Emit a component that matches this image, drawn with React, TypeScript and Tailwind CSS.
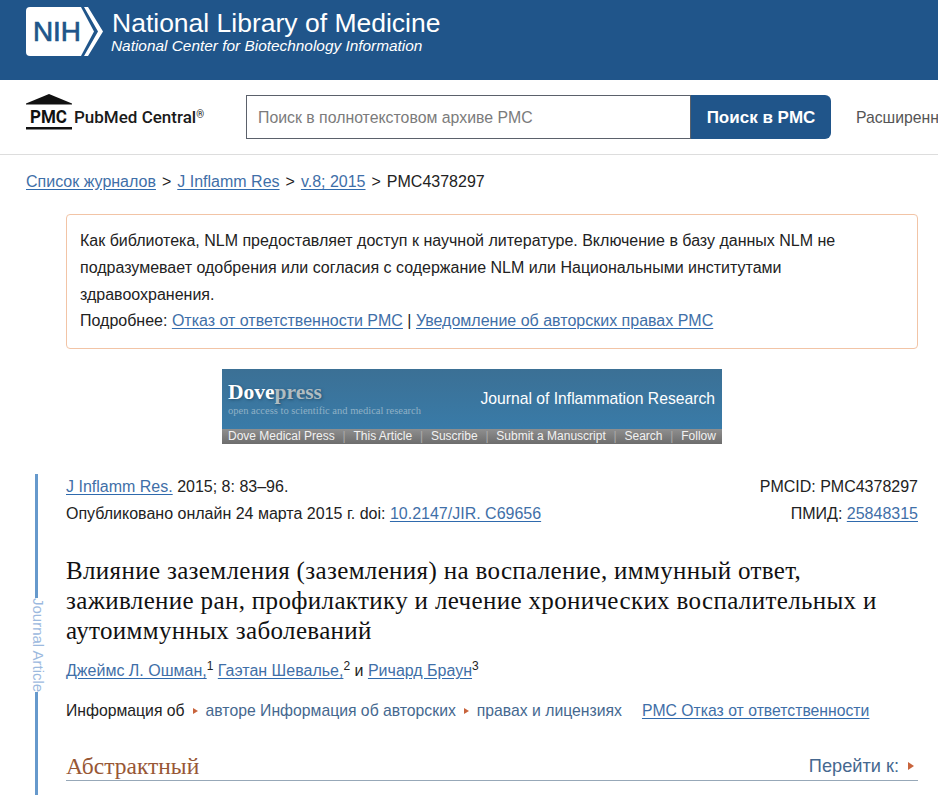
const sans = { fontFamily: '"Liberation Sans", Arial, sans-serif' };

function NihLogo() {
  return (
    <svg width="78" height="49" viewBox="0 0 78 49" className="shrink-0">
      <path d="M4 0H55L68 24.500L55 49H4Q0 49 0 45V4Q0 0 4 0Z" fill="#fff" />
      <path d="M58 0H62L77 24.500L62 49H58L72 24.500Z" fill="#fff" />
      <text x="7" y="34" fontFamily="Liberation Sans, Arial, sans-serif" fontSize="28" stroke="#20558a" strokeWidth="0.7" fill="#20558a" textLength="48" lengthAdjust="spacingAndGlyphs">NIH</text>
    </svg>
  );
}

function PmcLogo() {
  return (
    <svg width="46" height="36" viewBox="0 0 46 36" className="mt-[14px] shrink-0 self-start">
      <path d="M23 0L46 9.500V10.500H0V9.500Z" fill="#111" />
      <text x="4" y="29" fontFamily="Roboto, Arial, sans-serif" fontWeight="700" fontSize="17.500" fill="#111" textLength="37" lengthAdjust="spacingAndGlyphs">PMC</text>
      <rect x="0" y="33" width="46" height="2.500" fill="#111" />
    </svg>
  );
}

function Tri() {
  return <span className="mx-[8px] inline-block h-0 w-0 border-y-[3px] border-l-[5px] border-y-transparent border-l-[#c8643c] align-[2px]" />;
}

function A({ children }: { children: React.ReactNode }) {
  return <a className="text-[#3f6fa8] underline underline-offset-2 decoration-[#2f6aad]">{children}</a>;
}

export default function App() {
  return (
    <div className="h-[795px] w-[938px] overflow-hidden bg-white text-[16px] text-[#222]" style={sans}>
      <header className="flex h-20 items-start gap-2 bg-[#20558a] pl-[26px] pt-[7px] text-white">
        <NihLogo />
        <div className="flex flex-col">
          <span className="text-[26.500px] leading-[32px]">National Library of Medicine</span>
          <span className="-mt-[2px] -ml-[1px] text-[15.400px] italic leading-[18px]">National Center for Biotechnology Information</span>
        </div>
      </header>

      <div className="flex h-[75px] items-center border-b border-[#ddd] pl-[26px]">
        <PmcLogo />
        <span className="ml-[2px] w-[172px] shrink-0 whitespace-nowrap pt-[1px] text-[17px] font-medium text-[#1a1a1a]" style={{ fontFamily: 'Roboto, Arial, sans-serif' }}>
          PubMed Central<sup className="text-[10px]">®</sup>
        </span>
        <div className="flex h-11 w-[445px] shrink-0 items-center border border-[#5b616b] pl-[11px] pt-[1px] text-[15.850px] text-[#7b7b7b]">
          Поиск в полнотекстовом архиве PMC
        </div>
        <button className="h-11 w-[140px] shrink-0 rounded-r-md bg-[#20558a] pt-[1px] text-[17px] font-bold text-white">Поиск в PMC</button>
        <a className="ml-[25px] shrink-0 whitespace-nowrap pt-[1px] text-[15.750px] text-[#555]">Расширенный поиск</a>
      </div>

      <nav className="flex h-[52px] items-center pl-[26px] pt-[2px]">
        <A>Список журналов</A>
        <span className="mx-[6px]">&gt;</span>
        <A>J Inflamm Res</A>
        <span className="mx-[6px]">&gt;</span>
        <A>v.8; 2015</A>
        <span className="mx-[6px]">&gt;</span>
        <span>PMC4378297</span>
      </nav>

      <section className="ml-[66px] mr-[20px] mt-[7px] h-[135px] rounded border border-[#f2c4a6] px-[13px] pt-[12px] leading-[27px]">
        <p>Как библиотека, NLM предоставляет доступ к научной литературе. Включение в базу данных NLM не подразумевает одобрения или согласия с содержание NLM или Национальными институтами здравоохранения.</p>
        <p className="leading-[26px]">Подробнее: <A>Отказ от ответственности PMC</A> | <A>Уведомление об авторских правах PMC</A></p>
      </section>

      <div className="ml-[222px] mt-5 flex h-[75px] w-[500px] flex-col">
        <div className="flex h-[60px] items-center justify-between bg-gradient-to-b from-[#3b7095] to-[#397ba8] pl-[6px] pr-[7px]">
          <div className="flex flex-col" style={{ fontFamily: '"Liberation Serif", serif' }}>
            <span className="text-[21.500px] font-bold leading-[22px] text-white [text-shadow:1px_1px_3px_#24506e]">Dove<span className="text-[#b0bcc1]">press</span></span>
            <span className="mt-[1px] text-[10.500px] leading-[14px] text-[#8fb1c6]">open access to scientific and medical research</span>
          </div>
          <span className="text-[15.700px] text-white">Journal of Inflammation Research</span>
        </div>
        <div className="flex h-[15px] items-center justify-between bg-gradient-to-b from-[#8f8f8f] to-[#6d6d6d] px-[6px] pb-[1px] text-[12px] text-[#f2f2f2]">
          <span>Dove Medical Press</span><span className="text-[#aaa]">|</span><span>This Article</span><span className="text-[#aaa]">|</span><span>Suscribe</span><span className="text-[#aaa]">|</span><span>Submit a Manuscript</span><span className="text-[#aaa]">|</span><span>Search</span><span className="text-[#aaa]">|</span><span>Follow</span>
        </div>
      </div>

      <article className="relative ml-[35px] mt-[30px] h-[400px] border-l-[3px] border-[#6699cc] pl-[28px] pr-[20px] pt-px">
        <span className="absolute -left-[12px] top-[124px] bg-white py-[4px] text-[15px] leading-[16px] text-[#9cb9de] [writing-mode:vertical-rl]">Journal Article</span>
        <div className="-mt-[2px] flex justify-between leading-[27px]">
          <div>
            <p><A>J Inflamm Res.</A> 2015; 8: 83–96.</p>
            <p>Опубликовано онлайн 24 марта 2015 г. doi: <A>10.2147/JIR. C69656</A></p>
          </div>
          <div className="text-right">
            <p>PMCID: PMC4378297</p>
            <p>ПМИД: <A>25848315</A></p>
          </div>
        </div>
        <h1 className="mt-[29px] text-[25px] leading-[30px] tracking-[0.35px] text-[#111]" style={{ fontFamily: '"Liberation Serif", serif' }}>
          Влияние заземления (заземления) на воспаление, иммунный ответ, заживление ран, профилактику и лечение хронических воспалительных и аутоиммунных заболеваний
        </h1>
        <p className="mt-[13px] leading-[24px]">
          <A>Джеймс Л. Ошман,</A><sup className="text-[12px]">1</sup> <A>Гаэтан Шевалье,</A><sup className="text-[12px]">2</sup> и <A>Ричард Браун</A><sup className="text-[12px]">3</sup>
        </p>
        <p className="mt-[16px] flex items-center whitespace-nowrap text-[15.750px] leading-[24px]">
          Информация об<Tri /><span className="text-[#45688f]">авторе Информация об авторских</span><Tri /><span className="text-[#45688f]">правах и лицензиях</span>
          <span className="ml-5"><A>PMC Отказ от ответственности</A></span>
        </p>
        <div className="mt-[29px] flex items-end justify-between border-b border-[#97a8b8]">
          <h2 className="text-[23.500px] leading-[28px] text-[#985735]" style={{ fontFamily: '"Liberation Serif", serif' }}>Абстрактный</h2>
          <span className="flex items-center pb-[2px] text-[18.200px] leading-[24px] text-[#45688f]">
            Перейти к:
            <span className="ml-[9px] mr-[4px] inline-block h-0 w-0 border-y-[4px] border-l-[6px] border-y-transparent border-l-[#c8643c]" />
          </span>
        </div>
      </article>
    </div>
  );
}
